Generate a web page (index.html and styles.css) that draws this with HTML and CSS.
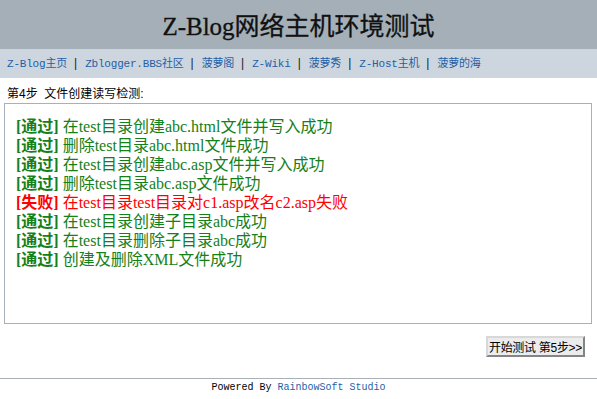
FILE: index.html
```html
<!DOCTYPE html>
<html lang="zh-CN">
<head>
  <meta charset="UTF-8">
  <title>Z-Blog网络主机环境测试</title>
  <link rel="stylesheet" href="styles.css">
</head>
<body>
  <div class="header">
    <h1>Z-Blog网络主机环境测试</h1>
  </div>

  <div class="nav">
    <a href="#">Z-Blog主页</a><span class="sep">|</span><a href="#">Zblogger.BBS社区</a><span class="sep">|</span><a href="#">菠萝阁</a><span class="sep">|</span><a href="#">Z-Wiki</a><span class="sep">|</span><a href="#">菠萝秀</a><span class="sep">|</span><a href="#">Z-Host主机</a><span class="sep">|</span><a href="#">菠萝的海</a>
  </div>

  <div class="main">
    <p class="step">第4步&nbsp; 文件创建读写检测:</p>

    <!-- 检测结果 -->
    <div class="result">
      <p class="ok"><b>[通过]</b> 在test目录创建abc.html文件并写入成功</p>
      <p class="ok"><b>[通过]</b> 删除test目录abc.html文件成功</p>
      <p class="ok"><b>[通过]</b> 在test目录创建abc.asp文件并写入成功</p>
      <p class="ok"><b>[通过]</b> 删除test目录abc.asp文件成功</p>
      <p class="fail"><b>[失败]</b> 在test目录test目录对c1.asp改名c2.asp失败</p>
      <p class="ok"><b>[通过]</b> 在test目录创建子目录abc成功</p>
      <p class="ok"><b>[通过]</b> 在test目录删除子目录abc成功</p>
      <p class="ok"><b>[通过]</b> 创建及删除XML文件成功</p>
    </div>

    <div class="actions">
      <button type="button">开始测试 第5步&gt;&gt;</button>
    </div>
  </div>

  <div class="footer">
    Powered By <a href="#">RainbowSoft Studio</a>
  </div>
</body>
</html>
```

FILE: styles.css
```css
body {
  margin: 0;
  font-family: "Liberation Sans", "Noto Sans CJK SC", sans-serif;
  font-size: 12px;
  color: #000;
  background: #fff;
}
.header {
  background: #a4afb8;
  height: 49px;
  display: flex;
  align-items: center;
  justify-content: center;
}
.header h1 {
  margin: 0 0 2px;
  font-family: "Liberation Serif", "Noto Sans CJK SC", serif;
  font-size: 25px;
  font-weight: normal;
  color: #111;
  -webkit-text-stroke: 0.3px #111;
}
.nav {
  background: #cdd6df;
  height: 29px;
  line-height: 29px;
  padding-left: 7px;
  white-space: nowrap;
}
.nav a {
  color: #1e5fa6;
  text-decoration: none;
  font-family: "Liberation Mono", "Noto Sans CJK SC", monospace;
  font-size: 11px;
  letter-spacing: -0.2px;
}
.nav .sep {
  margin: 0 8px 0 7px;
  font-size: 12px;
  color: #222;
}
.main {
  padding: 0 5px 0 4px;
}
.step {
  margin: 0;
  padding: 6px 0 0 3px;
  height: 19px;
  font-size: 12px;
}
.result {
  border: 1px solid #a8b0b8;
  height: 201px;
  padding: 13px 11px 5px;
}
.result p {
  margin: 0;
  font-family: "Liberation Serif", "Noto Sans CJK SC", serif;
  font-size: 16px;
  line-height: 19px;
}
.result .ok {
  color: #15801a;
}
.result .fail {
  color: #f00;
}
.actions {
  display: flex;
  justify-content: flex-end;
  padding: 12px 7px 0 0;
  height: 42px;
}
.actions button {
  height: 21px;
  padding: 0 1px;
  font-family: "Liberation Sans", "Noto Sans CJK SC", sans-serif;
  font-size: 12px;
  letter-spacing: -0.3px;
  color: #000;
  background: #ececec;
  border: 2px outset #d8d8d8;
}
.footer {
  border-top: 1px solid #a8b0b8;
  padding-top: 2px;
  text-align: center;
  font-family: "Liberation Mono", monospace;
  font-size: 10px;
  line-height: 14px;
}
.footer a {
  color: #1e5fa6;
  text-decoration: none;
}
```
